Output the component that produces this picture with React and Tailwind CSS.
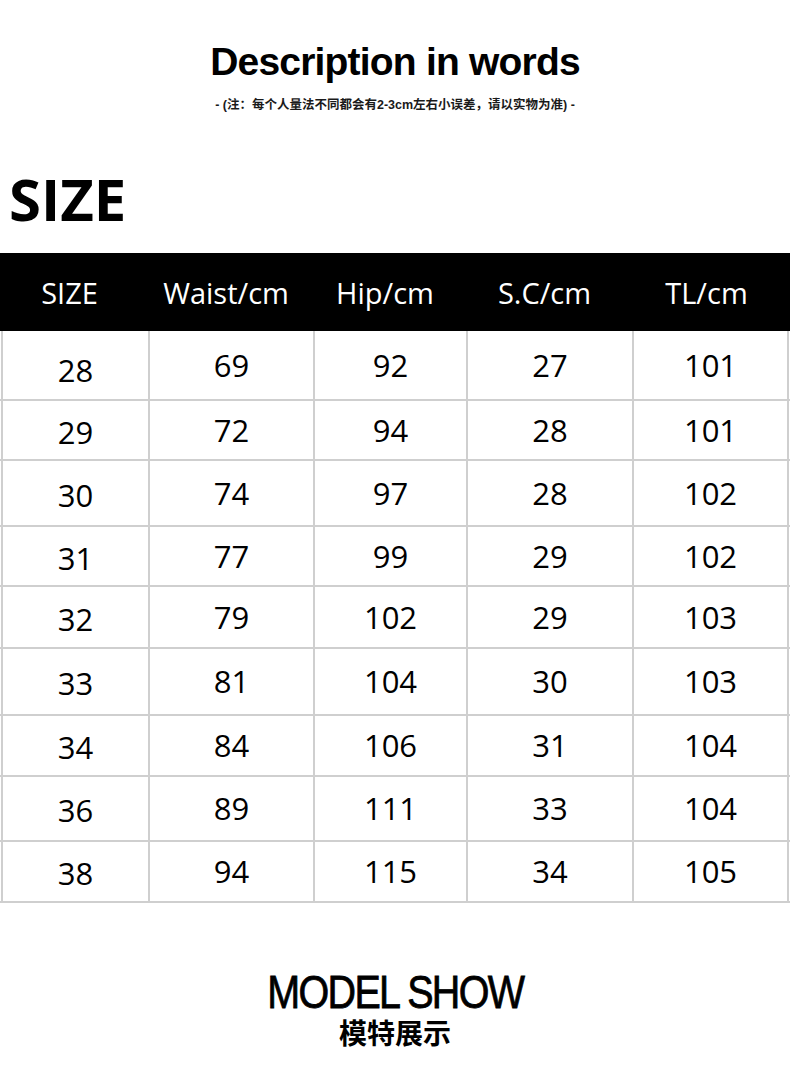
const headers = ["SIZE", "Waist/cm", "Hip/cm", "S.C/cm", "TL/cm"];

const rows = [
  { h: "h-[70px]", cells: ["28", "69", "92", "27", "101"] },
  { h: "h-[60px]", cells: ["29", "72", "94", "28", "101"] },
  { h: "h-[66px]", cells: ["30", "74", "97", "28", "102"] },
  { h: "h-[60px]", cells: ["31", "77", "99", "29", "102"] },
  { h: "h-[62px]", cells: ["32", "79", "102", "29", "103"] },
  { h: "h-[67px]", cells: ["33", "81", "104", "30", "103"] },
  { h: "h-[61px]", cells: ["34", "84", "106", "31", "104"] },
  { h: "h-[65px]", cells: ["36", "89", "111", "33", "104"] },
  { h: "h-[61px]", cells: ["38", "94", "115", "34", "105"] },
];

const cols = "grid grid-cols-[148px_165px_153px_166px_1fr]";

const App = () => {
  return (
    <div className="w-[790px] h-[1077px] bg-white text-black overflow-hidden">
      {/* Title */}
      <div className="pt-[39px] text-center">
        <p className="font-['Liberation_Sans',sans-serif] font-bold text-[39px] leading-[46px] tracking-[-0.8px]">
          Description in words
        </p>
        <p className="mt-[12px] font-['Liberation_Sans','Noto_Sans_CJK_SC',sans-serif] font-bold text-[12.5px] leading-[16px] text-[#1a1a1a]">
          - (注：每个人量法不同都会有2-3cm左右小误差，请以实物为准) -
        </p>
      </div>

      {/* SIZE heading */}
      <p className="mt-[57px] pl-[9px] font-['Open_Sans',sans-serif] font-bold text-[58px] leading-[58px]">
        SIZE
      </p>

      {/* Table */}
      <div className="mt-[25px]">
        {/* Head */}
        <div className={`${cols} h-[78px] bg-black text-white font-['Open_Sans',sans-serif] text-[29px]`}>
          {headers.map((h, i) => (
            <div key={i} className="flex items-center justify-center pr-[9px] pt-[2px]">
              {h}
            </div>
          ))}
        </div>
        {/* Body */}
        {rows.map((row, r) => (
          <div key={r} className={`${cols} ${row.h} border-b-2 border-[#cfcfcf] font-['Open_Sans',sans-serif] text-[31px]`}>
            {row.cells.map((c, i) => (
              <div
                key={i}
                className={`flex items-center justify-center border-l-2 border-[#cfcfcf] ${i === 0 ? "ml-[1px]" : ""} ${i === 4 ? "border-r-2 mr-[1px]" : ""} ${i === 0 && r === 0 ? "pt-[10px]" : ""} ${i === 0 && r !== 0 ? "pt-[4px]" : ""}`}
              >
                {c}
              </div>
            ))}
          </div>
        ))}
      </div>

      {/* Model show */}
      <div className="mt-[62px] flex flex-col items-center">
        <p className="font-['Liberation_Sans',sans-serif] text-[47px] leading-[54px] tracking-[-2px] scale-x-[0.84] [-webkit-text-stroke:0.8px_black]">
          MODEL SHOW
        </p>
        <p className="font-['Liberation_Sans','Noto_Sans_CJK_SC',sans-serif] font-bold text-[28px] leading-[32px]">
          模特展示
        </p>
      </div>
    </div>
  );
};

export default App;
